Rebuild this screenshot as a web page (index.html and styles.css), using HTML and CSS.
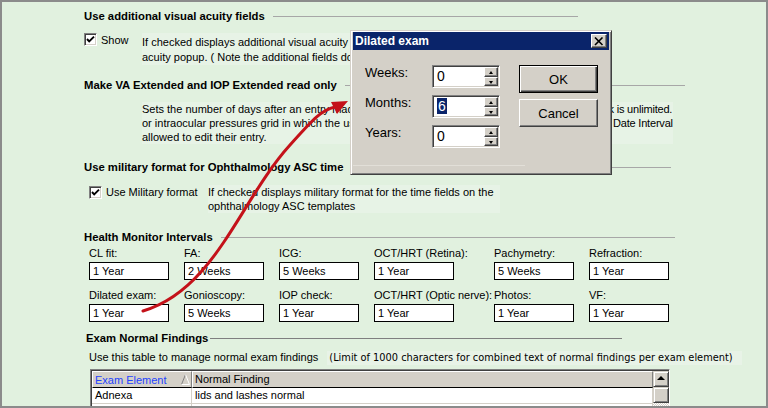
FILE: index.html
```html
<!DOCTYPE html>
<html lang="en">
<head>
  <meta charset="UTF-8" />
  <title>Ophthalmology Settings</title>
  <link rel="stylesheet" href="styles.css">
</head>
<body>
  <div class="window">

    <div class="group-title t-acuity"><span>Use additional visual acuity fields</span><i class="rule"></i></div>
    <div class="opt-row r-acuity">
      <label class="check">
        <span class="box"><svg width="11" height="11" viewBox="0 0 11 11"><polyline points="2,5 4.2,7.4 9,2.6" fill="none" stroke="#000" stroke-width="1.9"/></svg></span>
        Show
      </label>
      <p class="desc">If checked displays additional visual acuity fields on the<br>acuity popup. ( Note the additional fields do not print )</p>
    </div>

    <div class="group-title t-readonly"><span>Make VA Extended and IOP Extended read only</span><i class="rule"></i></div>
    <div class="desc-row">
      <p class="desc desc-lock">Sets the number of days after an entry made to the visual acuity<br>or intraocular pressures grid in which the user who made it is<br>allowed to edit their entry.</p>
      <p class="desc desc-note">Zero means the lock is unlimited.<br>Use the Entry Lock: Date Interval</p>
    </div>

    <div class="group-title t-military"><span>Use military format for Ophthalmology ASC time</span><i class="rule"></i></div>
    <div class="opt-row r-military">
      <label class="check">
        <span class="box"><svg width="11" height="11" viewBox="0 0 11 11"><polyline points="2,5 4.2,7.4 9,2.6" fill="none" stroke="#000" stroke-width="1.9"/></svg></span>
        Use Military format
      </label>
      <p class="desc">If checked displays military format for the time fields on the<br>ophthalmology ASC templates</p>
    </div>

    <div class="group-title t-health"><span>Health Monitor Intervals</span><i class="rule"></i></div>
    <div class="intervals">
      <div class="field"><label>CL fit:</label><input type="text" value="1 Year" readonly></div>
      <div class="field"><label>FA:</label><input type="text" value="2 Weeks" readonly></div>
      <div class="field"><label>ICG:</label><input type="text" value="5 Weeks" readonly></div>
      <div class="field"><label>OCT/HRT (Retina):</label><input type="text" value="1 Year" readonly></div>
      <div class="field"><label>Pachymetry:</label><input type="text" value="5 Weeks" readonly></div>
      <div class="field"><label>Refraction:</label><input type="text" value="1 Year" readonly></div>
      <div class="field"><label>Dilated exam:</label><input type="text" value="1 Year" readonly></div>
      <div class="field"><label>Gonioscopy:</label><input type="text" value="5 Weeks" readonly></div>
      <div class="field"><label>IOP check:</label><input type="text" value="1 Year" readonly></div>
      <div class="field"><label>OCT/HRT (Optic nerve):</label><input type="text" value="1 Year" readonly></div>
      <div class="field"><label>Photos:</label><input type="text" value="1 Year" readonly></div>
      <div class="field"><label>VF:</label><input type="text" value="1 Year" readonly></div>
    </div>

    <div class="group-title t-findings"><span>Exam Normal Findings</span><i class="rule"></i></div>
    <p class="note">Use this table to manage normal exam findings <span class="limit">(Limit of 1000 characters for combined text of normal findings per exam element)</span></p>
    <div class="findings">
      <div class="findings-grid">
        <div class="th sorted">Exam Element
          <svg width="9" height="11" viewBox="0 0 9 11"><path d="M4.5 0.5 L0.5 10.5" stroke="#808080" fill="none"/><path d="M4.5 0.5 L8.5 10.5 L0.5 10.5" stroke="#fff" fill="none"/></svg>
        </div>
        <div class="th">Normal Finding</div>
        <div class="td">Adnexa</div><div class="td">lids and lashes normal</div>
        <div class="td"></div><div class="td"></div>
      </div>
      <div class="vscroll">
        <i class="sb-btn sb-up"></i>
        <i class="sb-btn sb-thumb"></i>
        <i class="sb-track"></i>
      </div>
    </div>

    <!-- Dilated exam popup -->
    <div class="dialog">
      <div class="dlg-title">
        <span>Dilated exam</span>
        <span class="dlg-close"><svg width="10" height="9" viewBox="0 0 10 9"><path d="M1 0.5 L8.5 8 M8.5 0.5 L1 8" stroke="#000" stroke-width="1.6"/></svg></span>
      </div>
      <div class="dlg-body">
        <div class="dlg-fields">
          <div class="dlg-row"><label>Weeks:</label><div class="spin"><span class="spin-val">0</span><span class="spin-btns"><i class="up"></i><i class="down"></i></span></div></div>
          <div class="dlg-row"><label>Months:</label><div class="spin"><span class="spin-val"><span class="sel">6</span></span><span class="spin-btns"><i class="up"></i><i class="down"></i></span></div></div>
          <div class="dlg-row"><label>Years:</label><div class="spin"><span class="spin-val">0</span><span class="spin-btns"><i class="up"></i><i class="down"></i></span></div></div>
        </div>
        <div class="dlg-buttons">
          <span class="btn btn-default">OK</span>
          <span class="btn">Cancel</span>
        </div>
      </div>
      <i class="dlg-sep"></i>
    </div>

    <svg class="callout" width="768" height="408" viewBox="0 0 768 408">
      <path d="M143,311 C215,290 240,200 290,145 C315,117 322,110 335,107" fill="none" stroke="#c4121a" stroke-width="3" stroke-linecap="round"/>
      <polygon points="348,101 331,102 337,114" fill="#c4121a"/>
    </svg>
  </div>
</body>
</html>
```

FILE: styles.css
```css
* {
  box-sizing: border-box;
}

body {
  margin: 0;
  font-family: "Liberation Sans", Arial, sans-serif;
  font-size: 11px;
  color: #000;
  background: #fff;
}

p {
  margin: 0;
}

.window {
  position: relative;
  width: 768px;
  height: 408px;
  border: 2px solid #8b8b8b;
  background: #e1f1df;
  padding: 7px 0 0 82px;
  overflow: hidden;
}

/* group headings with etched rule */
.group-title {
  display: flex;
  align-items: center;
  gap: 8px;
  height: 14px;
  line-height: 14px;
  font-size: 11.3px;
  font-weight: bold;
  white-space: nowrap;
}

.group-title .rule {
  flex: 1;
  height: 1px;
  background: #a7a7a7;
}

.t-acuity { width: 494px; }
.t-readonly { width: 601px; margin-top: 13px; }
.t-military { width: 587px; margin-top: 16px; }
.t-health { width: 591px; margin-top: 17px; }

.t-findings {
  width: 536px;
  margin: 9px 0 0 2px;
  gap: 2px;
}

.t-findings .rule {
  background: #7f7f7f;
}

/* checkbox rows */
.opt-row {
  display: flex;
  align-items: flex-start;
}

.r-acuity { margin-top: 10px; }
.r-military { margin-top: 11px; }

.check {
  display: flex;
  gap: 4px;
  line-height: 14px;
  white-space: nowrap;
}

.r-acuity .check { width: 58px; }

.r-military .check {
  width: 119px;
  margin-left: 5px;
}

.r-military .box { margin-top: 1px; }

.box {
  width: 13px;
  height: 13px;
  flex: none;
  background: #fff;
  border: 1px solid;
  border-color: #808080 #fff #fff #808080;
  box-shadow: inset 1px 1px #404040, inset -1px -1px #d4d0c8;
  display: flex;
  align-items: center;
  justify-content: center;
}

.desc {
  background: #e7f3e6;
  white-space: nowrap;
  line-height: 14px;
}

.r-acuity .desc {
  line-height: 15px;
  padding-top: 2px;
}

.r-military .desc { padding-right: 6px; }

.desc-row {
  display: flex;
  margin: 10px 0 0 58px;
}

.desc-lock { width: 376px; }

.desc-note { letter-spacing: -0.2px; }

/* health monitor intervals */
.intervals {
  display: grid;
  grid-template-columns: 95px 95px 95px 120px 95px 95px;
  row-gap: 8px;
  margin: 2px 0 0 5px;
}

.field label {
  display: block;
  line-height: 14px;
  margin-bottom: 2px;
  white-space: nowrap;
}

.field input {
  display: block;
  width: 80px;
  height: 18px;
  margin: 0;
  padding: 0 0 0 3px;
  border: 1px solid #000;
  background: #fff;
  font: 11px "Liberation Sans", Arial, sans-serif;
  color: #000;
  outline: none;
}

/* exam normal findings */
.note {
  margin: 5px 0 0 5px;
  line-height: 14px;
  white-space: nowrap;
}

.limit {
  display: inline-block;
  margin-left: 6px;
  padding: 0 9px 0 2px;
  background: #e8f3e7;
  font-family: "DejaVu Sans Condensed", "Liberation Sans", sans-serif;
  font-size: 10.9px;
}

.findings {
  display: flex;
  width: 580px;
  height: 60px;
  margin: 4px 0 0 6px;
  padding: 1px 0 0 1px;
  border: 1px solid;
  border-color: #808080 #fff #fff #808080;
  box-shadow: inset 1px 1px #404040;
  background: #fff;
}

.findings-grid {
  flex: 1;
  display: grid;
  grid-template-columns: 100px 1fr;
  grid-template-rows: 17px 16px 16px;
}

.th {
  background: #d4d0c8;
  border-top: 1px solid #fff;
  border-left: 1px solid #fff;
  border-right: 1px solid #808080;
  border-bottom: 1px solid #000;
  padding-left: 2px;
  line-height: 14px;
  white-space: nowrap;
}

.th.sorted {
  display: flex;
  justify-content: space-between;
  align-items: center;
  padding-right: 1px;
  color: #2342ff;
}

.td {
  border-right: 1px solid #d4d0c8;
  border-bottom: 1px solid #d4d0c8;
  padding-left: 3px;
  line-height: 15px;
  white-space: nowrap;
}

.vscroll {
  width: 16px;
  display: flex;
  flex-direction: column;
}

.sb-btn {
  height: 16px;
  flex: none;
  background: #d4d0c8;
  border: 1px solid;
  border-color: #d4d0c8 #404040 #404040 #d4d0c8;
  box-shadow: inset 1px 1px #fff, inset -1px -1px #808080;
  position: relative;
}

.sb-up::after {
  content: "";
  position: absolute;
  left: 3px;
  top: 4px;
  border-left: 4px solid transparent;
  border-right: 4px solid transparent;
  border-bottom: 4px solid #000;
}

.sb-track {
  flex: 1;
  background: repeating-conic-gradient(#d4d0c8 0 25%, #fff 0 50%) 0 0 / 2px 2px;
}

/* popup dialog */
.dialog {
  position: absolute;
  left: 348px;
  top: 28px;
  width: 262px;
  height: 145px;
  padding: 1px 2px 2px 2px;
  background: #d4d0c8;
  border: 1px solid;
  border-color: #d4d0c8 #404040 #404040 #d4d0c8;
  box-shadow: inset 1px 1px #fff, inset -1px -1px #808080;
  font-size: 13px;
}

.dlg-title {
  height: 18px;
  display: flex;
  align-items: center;
  justify-content: space-between;
  padding: 0 2px 0 2px;
  background: #0a246a;
  color: #fff;
  font-size: 12px;
  font-weight: bold;
}

.dlg-close {
  width: 16px;
  height: 14px;
  display: flex;
  align-items: center;
  justify-content: center;
  background: #d4d0c8;
  border: 1px solid;
  border-color: #fff #404040 #404040 #fff;
  box-shadow: inset -1px -1px #808080;
}

.dlg-body {
  display: flex;
  padding: 15px 0 0 12px;
}

.dlg-fields {
  display: flex;
  flex-direction: column;
  gap: 7px;
}

.dlg-row {
  display: flex;
  height: 23px;
}

.dlg-row label {
  width: 67px;
  line-height: 16px;
}

.spin {
  display: flex;
  width: 68px;
  height: 23px;
  padding: 1px 1px 1px 4px;
  border: 1px solid;
  border-color: #808080 #fff #fff #808080;
  box-shadow: inset 1px 1px #404040, inset -1px -1px #d4d0c8;
  background: #fff;
}

.spin-val {
  flex: 1;
  font-size: 14px;
  line-height: 19px;
}

.sel {
  display: inline-block;
  padding: 0 1px;
  line-height: 16px;
  background: #0a246a;
  color: #fff;
}

.spin-btns {
  width: 14px;
  display: flex;
  flex-direction: column;
}

.spin-btns i {
  flex: 1;
  position: relative;
  background: #d4d0c8;
  border: 1px solid;
  border-color: #fff #404040 #404040 #fff;
  box-shadow: inset -1px -1px #808080;
}

.spin-btns i::after {
  content: "";
  position: absolute;
  left: 4px;
  top: 3px;
  border-left: 2.5px solid transparent;
  border-right: 2.5px solid transparent;
}

.spin-btns .up::after { border-bottom: 3px solid #000; }
.spin-btns .down::after { border-top: 3px solid #000; }

.dlg-buttons {
  display: flex;
  flex-direction: column;
  gap: 6px;
  margin-left: 19px;
}

.btn {
  width: 79px;
  height: 28px;
  display: flex;
  align-items: center;
  justify-content: center;
  background: #d4d0c8;
  border: 1px solid;
  border-color: #fff #404040 #404040 #fff;
  box-shadow: inset -1px -1px #808080;
}

.btn-default {
  border-color: #000;
  box-shadow: inset 1px 1px #fff, inset -1px -1px #404040, inset -2px -2px #808080;
}

.dlg-sep {
  display: block;
  width: 172px;
  height: 1px;
  margin-top: 17px;
  background: #e2dfd8;
}

.callout {
  position: absolute;
  left: -2px;
  top: -2px;
  pointer-events: none;
}
```
